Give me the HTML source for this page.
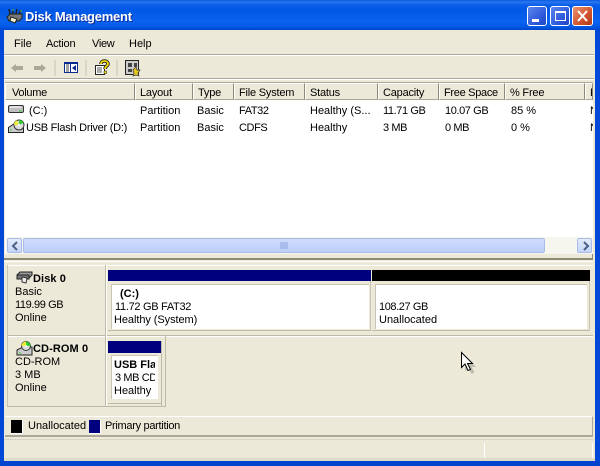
<!DOCTYPE html>
<html><head><meta charset="utf-8"><style>
html,body{margin:0;padding:0;width:600px;height:466px;overflow:hidden;background:#ece9d8}
body{position:relative;font:11px/13px "Liberation Sans",sans-serif;color:#000}
.a,.t{position:absolute}
.t{white-space:nowrap}
.n{letter-spacing:-.4px}
.h{position:absolute;top:83px;height:17px;background:#ece9d8;border-top:1px solid #fff;border-left:1px solid #fff;border-right:1px solid #8d8a78;border-bottom:1px solid #aca899;box-sizing:border-box;padding:3px 0 0 4px;white-space:nowrap;overflow:hidden;letter-spacing:-.2px}
b{font-weight:bold}
.sb{position:absolute;background:linear-gradient(#e3ebfd,#c5d5fb);border:1px solid #fff;box-sizing:border-box;border-radius:2px;outline:1px solid #a9bce8;outline-offset:-1px}
</style></head><body>
<div class="a" style="left:0;top:0;width:600px;height:30px;background:linear-gradient(#0a5ae0 0,#2a76f0 2px,#0a5ee8 5px,#0058e6 10px,#0a62ee 22px,#0058e4 27px,#0044cc 30px)"></div>
<div class="a" style="left:0;top:30px;width:4px;height:436px;background:#0049d8"></div>
<div class="a" style="left:595px;top:30px;width:5px;height:436px;background:#0049d8"></div>
<div class="a" style="left:0;top:461px;width:600px;height:5px;background:#0043cf"></div>
<svg class="a" style="left:6px;top:8px" width="17" height="16" viewBox="0 0 17 16"><path d="M1 9l3-3h12v4l-3 3H3z" fill="#777" stroke="#222"/><path d="M3 1l1 5M7 1l0 5M11 1l-1 5M15 2l-2 4" stroke="#222" stroke-width="1.500"/><path d="M7 1v2M15 2v2" stroke="#5c5"/><path d="M5 9l6 2-2 4-5-2z" fill="#f4f0d0" stroke="#222"/></svg>
<div class="t" style="left:25px;top:9px;font:bold 13px/15px 'Liberation Sans',sans-serif;letter-spacing:-.25px;color:#fff;text-shadow:1px 1px 0 #0a2a9c">Disk Management</div>
<div class="a" style="left:527px;top:6px;width:20px;height:20px;box-sizing:border-box;border:1px solid #fff;border-radius:3px;background:linear-gradient(135deg,#5a86ee,#2a55d8 70%,#2244c0)"><div class="a" style="left:4px;top:12px;width:7px;height:3px;background:#fff"></div></div>
<div class="a" style="left:550px;top:6px;width:20px;height:20px;box-sizing:border-box;border:1px solid #fff;border-radius:3px;background:linear-gradient(135deg,#5a86ee,#2a55d8 70%,#2244c0)"><div class="a" style="left:4px;top:4px;width:11px;height:10px;box-sizing:border-box;border:1px solid #fff;border-top-width:2px"></div></div>
<div class="a" style="left:572px;top:6px;width:21px;height:20px;box-sizing:border-box;border:1px solid #fff;border-radius:3px;background:linear-gradient(135deg,#e89272,#d0532c 60%,#b03a18)"><svg class="a" style="left:4px;top:3px" width="12" height="12"><path d="M1 1l9 10M10 1L1 11" stroke="#fff" stroke-width="2"/></svg></div>

<div class="a" style="left:4px;top:30px;width:591px;height:431px;background:#ece9d8"></div>
<div class="a" style="left:4px;top:54px;width:590px;height:1px;background:#aca899"></div>
<div class="a" style="left:4px;top:55px;width:590px;height:1px;background:#fff"></div>
<div class="a" style="left:4px;top:78px;width:590px;height:1px;background:#aca899"></div>
<div class="a" style="left:4px;top:79px;width:590px;height:1px;background:#fff"></div>
<div class="t" style="left:14px;top:38px">File</div>
<div class="t" style="left:46px;top:38px;letter-spacing:-.2px">Action</div>
<div class="t" style="left:92px;top:38px;letter-spacing:-.3px">View</div>
<div class="t" style="left:129px;top:38px">Help</div>

<svg class="a" style="left:10px;top:59px" width="132" height="18" viewBox="0 0 132 18">
<path d="M1 9l5-4v2h7v4H6v2z" fill="#aca899"/><path d="M36 9l-5-4v2h-7v4h7v2z" fill="#aca899"/>
<path d="M45 1v16M76 1v16M107 1v16" stroke="#c5c2b0"/>
<rect x="54.500" y="3.500" width="13" height="10" fill="#fff" stroke="#0a2a90"/><rect x="54" y="3" width="14" height="2" fill="#0a2a90"/><path d="M60.500 4v10" stroke="#0a2a90"/><path d="M56 6h3M56 8h3M56 10h3M56 12h3" stroke="#444"/><path d="M66 6l-4 3 4 3z" fill="#0a2a90"/>
<path d="M85.500 6.500h9v9h-9z" fill="#fff" stroke="#222"/><path d="M87 9h5M87 11h5M87 13h5" stroke="#555"/><path d="M91 5c0-4 7-4 7 0 0 2-3 2-3 5" fill="none" stroke="#222" stroke-width="3.500"/><path d="M91 5c0-4 7-4 7 0 0 2-3 2-3 5" fill="none" stroke="#f4d800" stroke-width="1.800"/><rect x="94" y="12" width="2.500" height="2.500" fill="#f4d800" stroke="#222" stroke-width=".5"/>
<rect x="115.500" y="1.500" width="13" height="14" fill="#ccc" stroke="#222"/><path d="M118 4h4v4h-4zM124 4h3v4h-3zM118 10h4v3h-4z" fill="#444"/><path d="M123 11l3-3 1 3 3 0-2 3 1 3-3-1-3 1 1-3z" fill="#e8c820" stroke="#333" stroke-width=".7"/>
</svg>

<div class="a" style="left:5px;top:82px;width:588px;height:172px;background:#fff;border-top:1px solid #aca899;box-sizing:border-box"></div>
<div class="h" style="left:5px;width:130px;padding-left:6px;letter-spacing:-.3px">Volume</div>
<div class="h" style="left:135px;width:58px">Layout</div>
<div class="h" style="left:193px;width:41px">Type</div>
<div class="h" style="left:234px;width:71px">File System</div>
<div class="h" style="left:305px;width:73px">Status</div>
<div class="h" style="left:378px;width:61px">Capacity</div>
<div class="h" style="left:439px;width:66px;letter-spacing:-.3px">Free Space</div>
<div class="h" style="left:505px;width:80px">% Free</div>
<div class="h" style="left:585px;width:8px">F</div>

<svg class="a" style="left:7px;top:103px" width="18" height="32" viewBox="0 0 18 32">
<rect x="1.500" y="2.500" width="15" height="7" rx="1.500" fill="#c0c0c0" stroke="#333"/><path d="M3 4h11" stroke="#eee" stroke-width="1.500"/><path d="M12 8h3" stroke="#3c3"/>
<path d="M1.500 29.500v-5l6-4h9v9z" fill="#ccc" stroke="#222"/><path d="M3 27h2" stroke="#3c3"/><circle cx="12" cy="22" r="5" fill="#ddd" stroke="#333"/><path d="M12 22v-5a5 5 0 0 1 4.500 3z" fill="#3c3"/><path d="M12 22H7a5 5 0 0 1 3-4.800z" fill="#ee3"/><circle cx="12" cy="22" r="1.200" fill="#fff"/>
</svg>
<div class="t" style="left:29px;top:105px">(C:)</div>
<div class="t" style="left:26px;top:122px;letter-spacing:-.25px">USB Flash Driver (D:)</div>
<div class="t" style="left:140px;top:105px">Partition</div><div class="t" style="left:140px;top:122px">Partition</div>
<div class="t" style="left:197px;top:105px">Basic</div><div class="t" style="left:197px;top:122px">Basic</div>
<div class="t n" style="left:239px;top:105px">FAT32</div><div class="t n" style="left:239px;top:122px">CDFS</div>
<div class="t" style="left:310px;top:105px">Healthy (S...</div><div class="t" style="left:310px;top:122px">Healthy</div>
<div class="t n" style="left:383px;top:105px">11.71 GB</div><div class="t n" style="left:383px;top:122px">3 MB</div>
<div class="t n" style="left:445px;top:105px">10.07 GB</div><div class="t n" style="left:445px;top:122px">0 MB</div>
<div class="t" style="left:511px;top:105px">85 %</div><div class="t" style="left:511px;top:122px">0 %</div>
<div class="t" style="left:590px;top:105px;width:3px;overflow:hidden">N</div><div class="t" style="left:590px;top:122px;width:3px;overflow:hidden">N</div>

<div class="a" style="left:6px;top:237px;width:587px;height:17px;background:#f6f5ee"></div>
<div class="sb" style="left:7px;top:238px;width:15px;height:15px"><svg class="a" style="left:3px;top:2px" width="8" height="10"><path d="M6 1L2 5l4 4" fill="none" stroke="#4d6185" stroke-width="2"/></svg></div>
<div class="sb" style="left:23px;top:238px;width:522px;height:15px;background:linear-gradient(#cfdcfc,#bccffa)"><svg class="a" style="left:256px;top:3px" width="8" height="8"><path d="M1 0v7M3 0v7M5 0v7M7 0v7" stroke="#8ea5dc"/></svg></div>
<div class="sb" style="left:577px;top:238px;width:15px;height:15px"><svg class="a" style="left:4px;top:2px" width="8" height="10"><path d="M2 1l4 4-4 4" fill="none" stroke="#4d6185" stroke-width="2"/></svg></div>

<div class="a" style="left:4px;top:254px;width:589px;height:4px;background:#ece9d8"></div>
<div class="a" style="left:4px;top:258px;width:589px;height:2px;background:#8d8a78"></div>
<div class="a" style="left:592px;top:254px;width:1px;height:6px;background:#8d8a78"></div>
<div class="a" style="left:4px;top:261px;width:589px;height:1px;background:#fff"></div>

<div class="a" style="left:7px;top:265px;width:586px;height:1px;background:#fff"></div>
<div class="a" style="left:7px;top:335px;width:586px;height:1px;background:#bdbaa8"></div>
<div class="a" style="left:7px;top:336px;width:586px;height:1px;background:#fff"></div>
<div class="a" style="left:7px;top:265px;width:1px;height:141px;background:#c8c5b4"></div>
<div class="a" style="left:105px;top:265px;width:1px;height:141px;background:#bdbaa8"></div>
<div class="a" style="left:106px;top:265px;width:1px;height:141px;background:#fff"></div>
<div class="a" style="left:7px;top:406px;width:159px;height:1px;background:#bdbaa8"></div>
<div class="a" style="left:165px;top:336px;width:1px;height:71px;background:#bdbaa8"></div>

<svg class="a" style="left:16px;top:271px" width="17" height="14" viewBox="0 0 17 14"><path d="M1 4l3-3h12v3l-3 3H1z" fill="#999" stroke="#222"/><path d="M1 4h12v4H1z" fill="#777" stroke="#222"/><path d="M6 6l5 1-1 5-4-1z" fill="#eee" stroke="#333"/></svg>
<div class="t" style="left:33px;top:273px;letter-spacing:.1px"><b>Disk 0</b></div>
<div class="t" style="left:15px;top:286px">Basic</div>
<div class="t n" style="left:15px;top:299px">119.99 GB</div>
<div class="t" style="left:15px;top:312px">Online</div>

<div class="a" style="left:108px;top:270px;width:263px;height:11px;background:#00007f"></div>
<div class="a" style="left:108px;top:281px;width:263px;height:50px;background:#ece9d8;border-right:1px solid #c8c5b4;box-sizing:border-box;border-bottom:1px solid #bdbaa8"></div>
<div class="a" style="left:111px;top:284px;width:258px;height:45px;background:#fff;border-top:1px solid #c8c5b4;border-left:1px solid #c8c5b4;box-sizing:border-box"></div>
<div class="t" style="left:120px;top:288px"><b>(C:)</b></div>
<div class="t n" style="left:115px;top:301px;letter-spacing:-.3px">11.72 GB FAT32</div>
<div class="t" style="left:114px;top:314px;letter-spacing:-.07px">Healthy (System)</div>

<div class="a" style="left:372px;top:270px;width:218px;height:11px;background:#000"></div>
<div class="a" style="left:372px;top:281px;width:218px;height:50px;background:#ece9d8;border-right:1px solid #c8c5b4;box-sizing:border-box;border-bottom:1px solid #bdbaa8"></div>
<div class="a" style="left:375px;top:284px;width:212px;height:45px;background:#fff;border-top:1px solid #c8c5b4;border-left:1px solid #c8c5b4;box-sizing:border-box"></div>
<div class="t n" style="left:379px;top:301px">108.27 GB</div>
<div class="t" style="left:379px;top:314px">Unallocated</div>

<svg class="a" style="left:16px;top:341px" width="17" height="15" viewBox="0 0 17 15"><path d="M1 14V9l6-3h9v8z" fill="#ccc" stroke="#222"/><path d="M3 12h2" stroke="#3c3"/><circle cx="10" cy="5" r="4.500" fill="#ddd" stroke="#333"/><path d="M10 5V.5A4.500 4.500 0 0 1 14.500 5z" fill="#3c3"/><path d="M10 5H5.500A4.500 4.500 0 0 1 10 .5z" fill="#ee3"/><circle cx="10" cy="5" r="1" fill="#fff"/></svg>
<div class="t" style="left:33px;top:343px;letter-spacing:.1px"><b>CD-ROM 0</b></div>
<div class="t" style="left:15px;top:356px">CD-ROM</div>
<div class="t" style="left:15px;top:369px">3 MB</div>
<div class="t" style="left:15px;top:382px">Online</div>

<div class="a" style="left:108px;top:341px;width:53px;height:12px;background:#00007f"></div>
<div class="a" style="left:161px;top:341px;width:1px;height:65px;background:#bdbaa8"></div>
<div class="a" style="left:108px;top:403px;width:54px;height:1px;background:#bdbaa8"></div>
<div class="a" style="left:111px;top:355px;width:47px;height:44px;background:#fff;border-top:1px solid #c8c5b4;border-left:1px solid #c8c5b4;box-sizing:border-box"></div>
<div class="t" style="left:114px;top:359px;width:41px;overflow:hidden"><b>USB Flash</b></div>
<div class="t n" style="left:115px;top:372px;width:40px;overflow:hidden">3 MB CDFS</div>
<div class="t" style="left:114px;top:385px;width:41px;overflow:hidden">Healthy</div>

<div class="a" style="left:5px;top:416px;width:588px;height:21px;box-sizing:border-box;border-top:1px solid #fff;border-right:1px solid #aca899;border-bottom:2px solid #aca899"></div>
<div class="a" style="left:11px;top:420px;width:11px;height:13px;background:#000;border-right:1px solid #fff;border-bottom:1px solid #fff"></div>
<div class="t" style="left:28px;top:420px">Unallocated</div>
<div class="a" style="left:89px;top:420px;width:11px;height:13px;background:#00007f;border-right:1px solid #fff;border-bottom:1px solid #fff"></div>
<div class="t" style="left:105px;top:420px;letter-spacing:-.3px">Primary partition</div>

<div class="a" style="left:4px;top:439px;width:590px;height:1px;background:#d8d5c4"></div>
<div class="a" style="left:484px;top:443px;width:1px;height:16px;background:#fff"></div>
<div class="a" style="left:592px;top:443px;width:1px;height:16px;background:#fff"></div>
<div class="a" style="left:4px;top:458px;width:591px;height:3px;background:#dedbca"></div>

<svg class="a" style="left:460px;top:351px" width="16" height="24" viewBox="0 0 16 24"><path d="M3.500 3.500v15l3.500-3 3 6 3-1.500-3-5.500h4.500z" fill="#777" opacity=".4" transform="translate(1.500 1.500)"/><path d="M1.500 1.500v15l3.500-3.500 3 6.500 2.500-1-3-6h5z" fill="#fff" stroke="#000" stroke-width="1"/></svg>
</body></html>
